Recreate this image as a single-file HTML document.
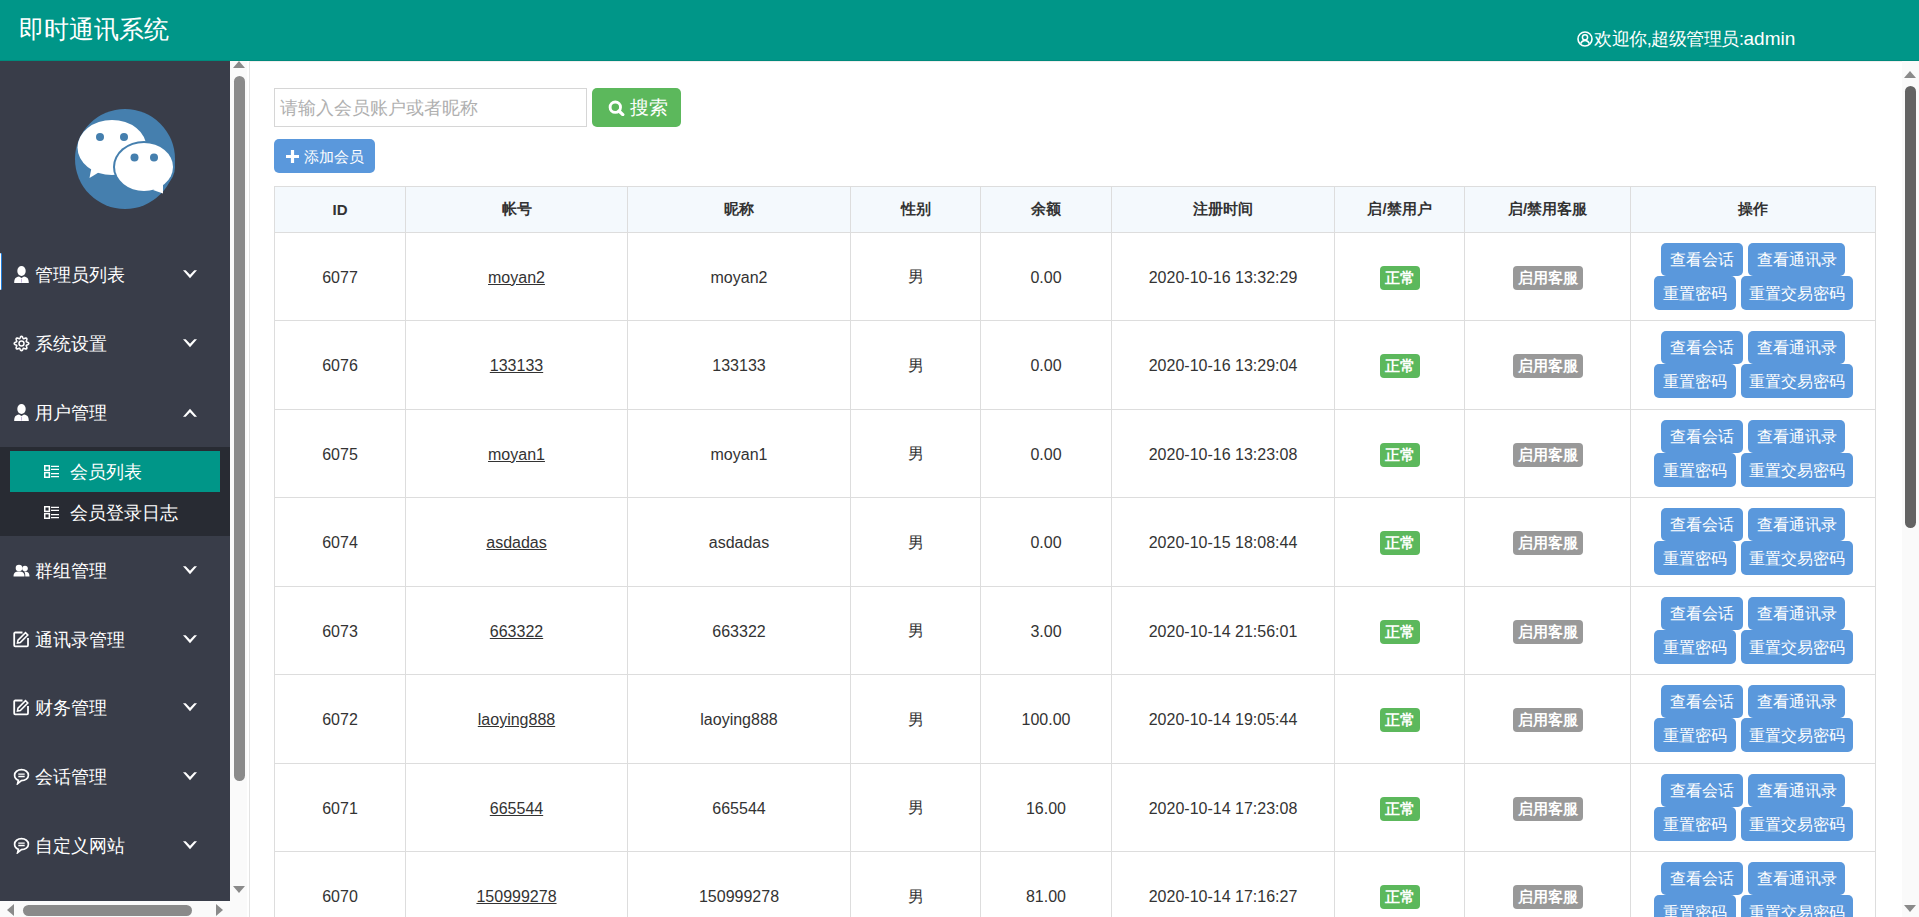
<!DOCTYPE html><html><head><meta charset="utf-8"><style>*{box-sizing:border-box;margin:0;padding:0}
html,body{width:1919px;height:917px;overflow:hidden;background:#fff;font-family:"Liberation Sans",sans-serif;position:relative}
.hdr{position:absolute;left:0;top:0;width:1919px;height:61px;background:#009688;border-bottom:1px solid #008a7c}
.title{position:absolute;left:19px;top:13px;font-size:25px;line-height:32px;color:#fff;white-space:nowrap}
.welcome{position:absolute;left:1577px;top:27px;font-size:18px;letter-spacing:-0.45px;line-height:24px;color:#fff;white-space:nowrap}
.side{position:absolute;left:0;top:61px;width:230px;height:840px;background:#393d49;overflow:hidden}
.logo{position:absolute;left:75px;top:48px;width:100px;height:100px}
.mi{position:absolute;left:0;width:230px;height:69px;color:#fff;font-size:18px}
.mi .ic{position:absolute;left:13px;top:26px;width:17px;height:17px}
.mi .ic.u{top:25px}
.mi .tx{position:absolute;left:35px;top:23px;line-height:24px;white-space:nowrap}
.mi .chev{position:absolute;left:183px;top:30px;width:14px;height:9px}
.sub{position:absolute;left:0;top:386px;width:230px;height:89px;background:#282b33}
.si{position:absolute;left:10px;width:210px;height:41px;color:#fff;font-size:18px}
.si.act{background:#009688}
.si .ic{position:absolute;left:34px;top:14px;width:15px;height:13px}
.si .tx{position:absolute;left:60px;top:9px;line-height:24px;white-space:nowrap}
.focus{position:absolute;left:0;top:192px;width:1.3px;height:37px;background:#fff;box-shadow:0.8px 0 0 #1e90ff;border-radius:0 2px 2px 0}
.sb{position:absolute;background:#fafafa}
.thumb{position:absolute;background:#8a8a8a;border-radius:6px}
.arr{position:absolute;width:0;height:0}
.vline{position:absolute;left:249px;top:62px;width:1px;height:855px;background:#e3e3e3}
.tline{position:absolute;left:249px;top:61px;width:1653px;height:1px;background:#f3eeee}
.inp{position:absolute;left:274px;top:88px;width:313px;height:39px;border:1px solid #d6d6d6;background:#fff}
.inp span{position:absolute;left:5px;top:7px;font-size:17.8px;line-height:24px;color:#b0b0b0;white-space:nowrap}
.sbtn{position:absolute;left:592px;top:88px;width:89px;height:39px;background:#5cb85c;border-radius:5px;color:#fff;font-size:18.5px}
.sbtn span{position:absolute;left:38px;top:8px;line-height:24px;white-space:nowrap}
.sbtn svg{position:absolute;left:16px;top:12px}
.abtn{position:absolute;left:274px;top:139px;width:101px;height:34px;background:#5a98dc;border-radius:5px;color:#fff;font-size:15px}
.abtn span{position:absolute;left:30px;top:9px;line-height:18px;white-space:nowrap}
.abtn svg{position:absolute;left:12px;top:11px}
.tbl{position:absolute;left:0;top:0;width:1919px;height:917px}
.thbg{position:absolute;background:#f4f9fd}
.hl{position:absolute;left:274px;width:1602px;height:1px;background:#dddddd}
.vl{position:absolute;top:186px;width:1px;height:731px;background:#dddddd}
.th{position:absolute;top:187px;height:45px;display:flex;align-items:center;justify-content:center;font-weight:bold;font-size:15px;color:#333;white-space:nowrap}
.td{position:absolute;display:flex;align-items:center;justify-content:center;padding-top:2px;font-size:16px;color:#333;white-space:nowrap}
.td u{text-decoration:underline}
.lab{display:inline-block;font-size:15px;font-weight:bold;color:#fff;line-height:17px;padding:3px 5px 4px;border-radius:4px;position:relative;top:0}
.lg{background:#5cb85c}
.lgr{background:#999}
.ops{position:absolute;height:67px}
.orow{display:flex;justify-content:center;height:33px}
.orow+.orow{height:34px}
.b{display:block;background:#5a98dc;color:#fff;font-size:15.5px;line-height:18px;padding:8px 0 7px;text-align:center;border-radius:5px;white-space:nowrap;margin:0 2.5px}
.orow+.orow .b{padding:9px 0 7px}
.w82{width:82px}.w97{width:97px}.w112{width:112px}
</style></head><body>
<div class="hdr"><div class="title">即时通讯系统</div>
<div class="welcome"><svg width="16" height="16" viewBox="0 0 16 16" style="position:relative;top:2px;margin-right:1px"><circle cx="8" cy="8" r="7" fill="none" stroke="#fff" stroke-width="1.6"/><circle cx="8" cy="6.3" r="2.6" fill="none" stroke="#fff" stroke-width="1.5"/><path d="M3.6 12.6 C4.6 10.4 6 9.6 8 9.6 C10 9.6 11.4 10.4 12.4 12.6" fill="none" stroke="#fff" stroke-width="1.5"/></svg>欢迎你,超级管理员:<span style="font-size:19px;letter-spacing:0">admin</span></div></div>
<div class="side">
<svg class="logo" viewBox="0 0 100 100"><circle cx="50" cy="50" r="50" fill="#457fae"/>
<ellipse cx="37" cy="38.5" rx="34.5" ry="27.5" fill="#fff"/><path d="M17 56 L14.5 69 L26 62 Z" fill="#fff"/>
<circle cx="25" cy="28" r="4" fill="#457fae"/><circle cx="49" cy="28" r="4" fill="#457fae"/>
<ellipse cx="69" cy="58" rx="31" ry="26" fill="#457fae"/><ellipse cx="69" cy="58" rx="29" ry="24" fill="#fff"/><path d="M78 81 L88 84.5 L88 74 Z" fill="#fff"/>
<circle cx="59.5" cy="48.5" r="4" fill="#457fae"/><circle cx="79" cy="48.5" r="4" fill="#457fae"/></svg>
<div class="focus"></div>
<div class="mi" style="top:179px"><svg class="ic" viewBox="0 0 17 17"><ellipse cx="8.5" cy="5" rx="4.2" ry="5" fill="#fff"/><path d="M1.2 17 C1.2 12.8 2.5 11.2 6 10.6 L8.5 12 L11 10.6 C14.5 11.2 15.8 12.8 15.8 17 Z" fill="#fff"/><path d="M8.5 12.8V16.5" stroke="#b9a3d6" stroke-width="0.8"/></svg><span class="tx">管理员列表</span><svg class="chev" viewBox="0 0 14 9"><path d="M0 0.3 L2.7 0.3 L7 4.7 L11.3 0.3 L14 0.3 L7 8.3 Z" fill="#fff"/></svg></div>
<div class="mi" style="top:248px"><svg class="ic" viewBox="0 0 17 17"><g fill="none" stroke="#fff"><path stroke-width="1.6" d="M8.50 1.25 L8.96 1.41 L9.38 1.83 L9.71 2.42 L9.97 3.02 L10.20 3.49 L10.47 3.74 L10.84 3.75 L11.34 3.59 L11.94 3.34 L12.59 3.16 L13.19 3.15 L13.63 3.37 L13.85 3.81 L13.84 4.41 L13.66 5.06 L13.41 5.66 L13.25 6.16 L13.26 6.53 L13.51 6.80 L13.98 7.03 L14.58 7.29 L15.17 7.62 L15.59 8.04 L15.75 8.50 L15.59 8.96 L15.17 9.38 L14.58 9.71 L13.98 9.97 L13.51 10.20 L13.26 10.47 L13.25 10.84 L13.41 11.34 L13.66 11.94 L13.84 12.59 L13.85 13.19 L13.63 13.63 L13.19 13.85 L12.59 13.84 L11.94 13.66 L11.34 13.41 L10.84 13.25 L10.47 13.26 L10.20 13.51 L9.97 13.98 L9.71 14.58 L9.38 15.17 L8.96 15.59 L8.50 15.75 L8.04 15.59 L7.62 15.17 L7.29 14.58 L7.03 13.98 L6.80 13.51 L6.53 13.26 L6.16 13.25 L5.66 13.41 L5.06 13.66 L4.41 13.84 L3.81 13.85 L3.37 13.63 L3.15 13.19 L3.16 12.59 L3.34 11.94 L3.59 11.34 L3.75 10.84 L3.74 10.47 L3.49 10.20 L3.02 9.97 L2.42 9.71 L1.83 9.38 L1.41 8.96 L1.25 8.50 L1.41 8.04 L1.83 7.62 L2.42 7.29 L3.02 7.03 L3.49 6.80 L3.74 6.53 L3.75 6.16 L3.59 5.66 L3.34 5.06 L3.16 4.41 L3.15 3.81 L3.37 3.37 L3.81 3.15 L4.41 3.16 L5.06 3.34 L5.66 3.59 L6.16 3.75 L6.53 3.74 L6.80 3.49 L7.03 3.02 L7.29 2.42 L7.62 1.83 L8.04 1.41Z"/><circle cx="8.5" cy="8.5" r="2.5" stroke-width="1.5"/></g></svg><span class="tx">系统设置</span><svg class="chev" viewBox="0 0 14 9"><path d="M0 0.3 L2.7 0.3 L7 4.7 L11.3 0.3 L14 0.3 L7 8.3 Z" fill="#fff"/></svg></div>
<div class="mi" style="top:317px"><svg class="ic" viewBox="0 0 17 17"><ellipse cx="8.5" cy="5" rx="4.2" ry="5" fill="#fff"/><path d="M1.2 17 C1.2 12.8 2.5 11.2 6 10.6 L8.5 12 L11 10.6 C14.5 11.2 15.8 12.8 15.8 17 Z" fill="#fff"/><path d="M8.5 12.8V16.5" stroke="#b9a3d6" stroke-width="0.8"/></svg><span class="tx">用户管理</span><svg class="chev" viewBox="0 0 14 9"><path d="M0 8.7 L2.7 8.7 L7 4.3 L11.3 8.7 L14 8.7 L7 0.7 Z" fill="#fff"/></svg></div>
<div class="mi" style="top:475px"><svg class="ic" viewBox="0 0 17 17"><circle cx="6" cy="6" r="3.3" fill="#fff"/><path d="M0.5 14.5 C0.5 10.5 2.5 9.5 6 9.5 C9.5 9.5 11.5 10.5 11.5 14.5Z" fill="#fff"/><circle cx="12" cy="6.5" r="2.8" fill="#fff"/><path d="M11 9.6 C14.5 9.6 16.5 10.5 16.5 14.5 H12.3 C12.3 12 12 10.5 11 9.6Z" fill="#fff"/></svg><span class="tx">群组管理</span><svg class="chev" viewBox="0 0 14 9"><path d="M0 0.3 L2.7 0.3 L7 4.7 L11.3 0.3 L14 0.3 L7 8.3 Z" fill="#fff"/></svg></div>
<div class="mi" style="top:544px"><svg class="ic" viewBox="0 0 17 17"><path d="M9.5 1.5H2.2A1 1 0 0 0 1.2 2.5V14.3A1 1 0 0 0 2.2 15.3H14A1 1 0 0 0 15 14.3V7" fill="none" stroke="#fff" stroke-width="1.8"/><path d="M4.5 12 L5 9.2 L12.5 1.7 L14.8 4 L7.3 11.5Z" fill="none" stroke="#fff" stroke-width="1.6"/></svg><span class="tx">通讯录管理</span><svg class="chev" viewBox="0 0 14 9"><path d="M0 0.3 L2.7 0.3 L7 4.7 L11.3 0.3 L14 0.3 L7 8.3 Z" fill="#fff"/></svg></div>
<div class="mi" style="top:612px"><svg class="ic" viewBox="0 0 17 17"><path d="M9.5 1.5H2.2A1 1 0 0 0 1.2 2.5V14.3A1 1 0 0 0 2.2 15.3H14A1 1 0 0 0 15 14.3V7" fill="none" stroke="#fff" stroke-width="1.8"/><path d="M4.5 12 L5 9.2 L12.5 1.7 L14.8 4 L7.3 11.5Z" fill="none" stroke="#fff" stroke-width="1.6"/></svg><span class="tx">财务管理</span><svg class="chev" viewBox="0 0 14 9"><path d="M0 0.3 L2.7 0.3 L7 4.7 L11.3 0.3 L14 0.3 L7 8.3 Z" fill="#fff"/></svg></div>
<div class="mi" style="top:681px"><svg class="ic" viewBox="0 0 17 17"><path d="M5.4 12.3 L4.6 15.7 L8.4 12.7 C12.3 12.7 15.4 10.4 15.4 7.2 C15.4 4 12.4 1.7 8.5 1.7 C4.6 1.7 1.6 4 1.6 7.2 C1.6 9.5 3.1 11.4 5.4 12.3Z" fill="none" stroke="#fff" stroke-width="1.7"/><path d="M5.3 6.1H11.7M5.3 8.5H11.7" stroke="#fff" stroke-width="1.4"/></svg><span class="tx">会话管理</span><svg class="chev" viewBox="0 0 14 9"><path d="M0 0.3 L2.7 0.3 L7 4.7 L11.3 0.3 L14 0.3 L7 8.3 Z" fill="#fff"/></svg></div>
<div class="mi" style="top:750px"><svg class="ic" viewBox="0 0 17 17"><path d="M5.4 12.3 L4.6 15.7 L8.4 12.7 C12.3 12.7 15.4 10.4 15.4 7.2 C15.4 4 12.4 1.7 8.5 1.7 C4.6 1.7 1.6 4 1.6 7.2 C1.6 9.5 3.1 11.4 5.4 12.3Z" fill="none" stroke="#fff" stroke-width="1.7"/><path d="M5.3 6.1H11.7M5.3 8.5H11.7" stroke="#fff" stroke-width="1.4"/></svg><span class="tx">自定义网站</span><svg class="chev" viewBox="0 0 14 9"><path d="M0 0.3 L2.7 0.3 L7 4.7 L11.3 0.3 L14 0.3 L7 8.3 Z" fill="#fff"/></svg></div>
<div class="sub"><div class="si act" style="top:4px"><svg class="ic" viewBox="0 0 15 13"><rect x="0.75" y="0.75" width="4.6" height="4.6" fill="none" stroke="#fff" stroke-width="1.5"/><rect x="0.75" y="7.65" width="4.6" height="4.6" fill="none" stroke="#fff" stroke-width="1.5"/><path d="M7 1.4H15M7 4.4H15M7 8.6H15M7 11.6H15" stroke="#fff" stroke-width="1.3"/></svg><span class="tx">会员列表</span></div><div class="si" style="top:45px"><svg class="ic" viewBox="0 0 15 13"><rect x="0.75" y="0.75" width="4.6" height="4.6" fill="none" stroke="#fff" stroke-width="1.5"/><rect x="0.75" y="7.65" width="4.6" height="4.6" fill="none" stroke="#fff" stroke-width="1.5"/><path d="M7 1.4H15M7 4.4H15M7 8.6H15M7 11.6H15" stroke="#fff" stroke-width="1.3"/></svg><span class="tx">会员登录日志</span></div></div>
</div>
<div class="sb" style="left:230px;top:61px;width:17px;height:856px"></div>
<div class="thumb" style="left:234px;top:76px;width:11px;height:705px;border-radius:5.5px"></div>
<div class="arr" style="left:233px;top:61px;border-left:6.5px solid transparent;border-right:6.5px solid transparent;border-bottom:7px solid #8a8a8a"></div>
<div class="arr" style="left:233px;top:886px;border-left:6.5px solid transparent;border-right:6.5px solid transparent;border-top:7px solid #8a8a8a"></div>
<div class="sb" style="left:0;top:901px;width:247px;height:16px"></div>
<div class="thumb" style="left:23px;top:905px;width:169px;height:11px;border-radius:5.5px"></div>
<div class="arr" style="left:7px;top:904px;border-top:6.5px solid transparent;border-bottom:6.5px solid transparent;border-right:7px solid #8a8a8a"></div>
<div class="arr" style="left:216px;top:904px;border-top:6.5px solid transparent;border-bottom:6.5px solid transparent;border-left:7px solid #8a8a8a"></div>
<div class="vline"></div><div class="tline"></div>
<div class="sb" style="left:1902px;top:61px;width:17px;height:856px"></div>
<div class="thumb" style="left:1905px;top:86px;width:11px;height:442px;background:#636363;border-radius:5.5px"></div>
<div class="arr" style="left:1904px;top:71px;border-left:6.5px solid transparent;border-right:6.5px solid transparent;border-bottom:7px solid #8a8a8a"></div>
<div class="arr" style="left:1904px;top:905px;border-left:6.5px solid transparent;border-right:6.5px solid transparent;border-top:7px solid #8a8a8a"></div>
<div class="inp"><span>请输入会员账户或者昵称</span></div>
<div class="sbtn"><svg width="17" height="16" viewBox="0 0 17 16"><circle cx="7.3" cy="7.2" r="5.2" fill="none" stroke="#fff" stroke-width="2.9"/><path d="M11 11 L14.8 14.6" stroke="#fff" stroke-width="3.3" stroke-linecap="round"/></svg><span>搜索</span></div>
<div class="abtn"><svg width="13" height="13" viewBox="0 0 13 13"><path d="M6.5 0V13M0 6.5H13" stroke="#fff" stroke-width="3.2"/></svg><span>添加会员</span></div>

<div class="tbl">
<div class="thbg" style="left:275px;top:187px;width:1600px;height:45px"></div>
<div class="hl" style="top:186px"></div>
<div class="hl" style="top:232px"></div>
<div class="hl" style="top:320px"></div>
<div class="hl" style="top:409px"></div>
<div class="hl" style="top:497px"></div>
<div class="hl" style="top:586px"></div>
<div class="hl" style="top:674px"></div>
<div class="hl" style="top:763px"></div>
<div class="hl" style="top:851px"></div>
<div class="vl" style="left:274px"></div>
<div class="vl" style="left:405px"></div>
<div class="vl" style="left:627px"></div>
<div class="vl" style="left:850px"></div>
<div class="vl" style="left:980px"></div>
<div class="vl" style="left:1111px"></div>
<div class="vl" style="left:1334px"></div>
<div class="vl" style="left:1464px"></div>
<div class="vl" style="left:1630px"></div>
<div class="vl" style="left:1875px"></div>
<div class="th" style="left:275px;width:130px">ID</div>
<div class="th" style="left:406px;width:221px">帐号</div>
<div class="th" style="left:628px;width:222px">昵称</div>
<div class="th" style="left:851px;width:129px">性别</div>
<div class="th" style="left:981px;width:130px">余额</div>
<div class="th" style="left:1112px;width:222px">注册时间</div>
<div class="th" style="left:1335px;width:129px">启/禁用户</div>
<div class="th" style="left:1465px;width:165px">启/禁用客服</div>
<div class="th" style="left:1631px;width:244px">操作</div>
<div class="td" style="left:275px;top:233px;width:130px;height:87px">6077</div>
<div class="td" style="left:406px;top:233px;width:221px;height:87px"><u>moyan2</u></div>
<div class="td" style="left:628px;top:233px;width:222px;height:87px">moyan2</div>
<div class="td" style="left:851px;top:233px;width:129px;height:87px">男</div>
<div class="td" style="left:981px;top:233px;width:130px;height:87px">0.00</div>
<div class="td" style="left:1112px;top:233px;width:222px;height:87px">2020-10-16 13:32:29</div>
<div class="td" style="left:1335px;top:233px;width:129px;height:87px"><span class="lab lg">正常</span></div>
<div class="td" style="left:1465px;top:233px;width:165px;height:87px"><span class="lab lgr">启用客服</span></div>
<div class="ops" style="left:1631px;top:243px;width:244px"><div class="orow"><span class="b w82">查看会话</span><span class="b w97">查看通讯录</span></div><div class="orow"><span class="b w82">重置密码</span><span class="b w112">重置交易密码</span></div></div>
<div class="td" style="left:275px;top:321px;width:130px;height:88px">6076</div>
<div class="td" style="left:406px;top:321px;width:221px;height:88px"><u>133133</u></div>
<div class="td" style="left:628px;top:321px;width:222px;height:88px">133133</div>
<div class="td" style="left:851px;top:321px;width:129px;height:88px">男</div>
<div class="td" style="left:981px;top:321px;width:130px;height:88px">0.00</div>
<div class="td" style="left:1112px;top:321px;width:222px;height:88px">2020-10-16 13:29:04</div>
<div class="td" style="left:1335px;top:321px;width:129px;height:88px"><span class="lab lg">正常</span></div>
<div class="td" style="left:1465px;top:321px;width:165px;height:88px"><span class="lab lgr">启用客服</span></div>
<div class="ops" style="left:1631px;top:331px;width:244px"><div class="orow"><span class="b w82">查看会话</span><span class="b w97">查看通讯录</span></div><div class="orow"><span class="b w82">重置密码</span><span class="b w112">重置交易密码</span></div></div>
<div class="td" style="left:275px;top:410px;width:130px;height:87px">6075</div>
<div class="td" style="left:406px;top:410px;width:221px;height:87px"><u>moyan1</u></div>
<div class="td" style="left:628px;top:410px;width:222px;height:87px">moyan1</div>
<div class="td" style="left:851px;top:410px;width:129px;height:87px">男</div>
<div class="td" style="left:981px;top:410px;width:130px;height:87px">0.00</div>
<div class="td" style="left:1112px;top:410px;width:222px;height:87px">2020-10-16 13:23:08</div>
<div class="td" style="left:1335px;top:410px;width:129px;height:87px"><span class="lab lg">正常</span></div>
<div class="td" style="left:1465px;top:410px;width:165px;height:87px"><span class="lab lgr">启用客服</span></div>
<div class="ops" style="left:1631px;top:420px;width:244px"><div class="orow"><span class="b w82">查看会话</span><span class="b w97">查看通讯录</span></div><div class="orow"><span class="b w82">重置密码</span><span class="b w112">重置交易密码</span></div></div>
<div class="td" style="left:275px;top:498px;width:130px;height:88px">6074</div>
<div class="td" style="left:406px;top:498px;width:221px;height:88px"><u>asdadas</u></div>
<div class="td" style="left:628px;top:498px;width:222px;height:88px">asdadas</div>
<div class="td" style="left:851px;top:498px;width:129px;height:88px">男</div>
<div class="td" style="left:981px;top:498px;width:130px;height:88px">0.00</div>
<div class="td" style="left:1112px;top:498px;width:222px;height:88px">2020-10-15 18:08:44</div>
<div class="td" style="left:1335px;top:498px;width:129px;height:88px"><span class="lab lg">正常</span></div>
<div class="td" style="left:1465px;top:498px;width:165px;height:88px"><span class="lab lgr">启用客服</span></div>
<div class="ops" style="left:1631px;top:508px;width:244px"><div class="orow"><span class="b w82">查看会话</span><span class="b w97">查看通讯录</span></div><div class="orow"><span class="b w82">重置密码</span><span class="b w112">重置交易密码</span></div></div>
<div class="td" style="left:275px;top:587px;width:130px;height:87px">6073</div>
<div class="td" style="left:406px;top:587px;width:221px;height:87px"><u>663322</u></div>
<div class="td" style="left:628px;top:587px;width:222px;height:87px">663322</div>
<div class="td" style="left:851px;top:587px;width:129px;height:87px">男</div>
<div class="td" style="left:981px;top:587px;width:130px;height:87px">3.00</div>
<div class="td" style="left:1112px;top:587px;width:222px;height:87px">2020-10-14 21:56:01</div>
<div class="td" style="left:1335px;top:587px;width:129px;height:87px"><span class="lab lg">正常</span></div>
<div class="td" style="left:1465px;top:587px;width:165px;height:87px"><span class="lab lgr">启用客服</span></div>
<div class="ops" style="left:1631px;top:597px;width:244px"><div class="orow"><span class="b w82">查看会话</span><span class="b w97">查看通讯录</span></div><div class="orow"><span class="b w82">重置密码</span><span class="b w112">重置交易密码</span></div></div>
<div class="td" style="left:275px;top:675px;width:130px;height:88px">6072</div>
<div class="td" style="left:406px;top:675px;width:221px;height:88px"><u>laoying888</u></div>
<div class="td" style="left:628px;top:675px;width:222px;height:88px">laoying888</div>
<div class="td" style="left:851px;top:675px;width:129px;height:88px">男</div>
<div class="td" style="left:981px;top:675px;width:130px;height:88px">100.00</div>
<div class="td" style="left:1112px;top:675px;width:222px;height:88px">2020-10-14 19:05:44</div>
<div class="td" style="left:1335px;top:675px;width:129px;height:88px"><span class="lab lg">正常</span></div>
<div class="td" style="left:1465px;top:675px;width:165px;height:88px"><span class="lab lgr">启用客服</span></div>
<div class="ops" style="left:1631px;top:685px;width:244px"><div class="orow"><span class="b w82">查看会话</span><span class="b w97">查看通讯录</span></div><div class="orow"><span class="b w82">重置密码</span><span class="b w112">重置交易密码</span></div></div>
<div class="td" style="left:275px;top:764px;width:130px;height:87px">6071</div>
<div class="td" style="left:406px;top:764px;width:221px;height:87px"><u>665544</u></div>
<div class="td" style="left:628px;top:764px;width:222px;height:87px">665544</div>
<div class="td" style="left:851px;top:764px;width:129px;height:87px">男</div>
<div class="td" style="left:981px;top:764px;width:130px;height:87px">16.00</div>
<div class="td" style="left:1112px;top:764px;width:222px;height:87px">2020-10-14 17:23:08</div>
<div class="td" style="left:1335px;top:764px;width:129px;height:87px"><span class="lab lg">正常</span></div>
<div class="td" style="left:1465px;top:764px;width:165px;height:87px"><span class="lab lgr">启用客服</span></div>
<div class="ops" style="left:1631px;top:774px;width:244px"><div class="orow"><span class="b w82">查看会话</span><span class="b w97">查看通讯录</span></div><div class="orow"><span class="b w82">重置密码</span><span class="b w112">重置交易密码</span></div></div>
<div class="td" style="left:275px;top:852px;width:130px;height:88px">6070</div>
<div class="td" style="left:406px;top:852px;width:221px;height:88px"><u>150999278</u></div>
<div class="td" style="left:628px;top:852px;width:222px;height:88px">150999278</div>
<div class="td" style="left:851px;top:852px;width:129px;height:88px">男</div>
<div class="td" style="left:981px;top:852px;width:130px;height:88px">81.00</div>
<div class="td" style="left:1112px;top:852px;width:222px;height:88px">2020-10-14 17:16:27</div>
<div class="td" style="left:1335px;top:852px;width:129px;height:88px"><span class="lab lg">正常</span></div>
<div class="td" style="left:1465px;top:852px;width:165px;height:88px"><span class="lab lgr">启用客服</span></div>
<div class="ops" style="left:1631px;top:862px;width:244px"><div class="orow"><span class="b w82">查看会话</span><span class="b w97">查看通讯录</span></div><div class="orow"><span class="b w82">重置密码</span><span class="b w112">重置交易密码</span></div></div>
</div>
</body></html>
